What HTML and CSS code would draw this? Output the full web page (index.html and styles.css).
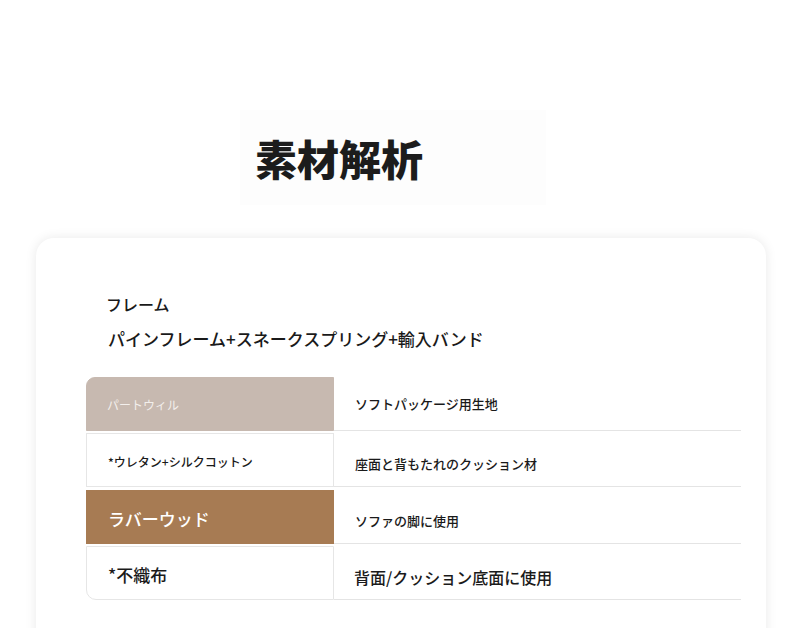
FILE: index.html
```html
<!DOCTYPE html>
<html lang="ja">
<head>
<meta charset="utf-8">
<title>素材解析</title>
<link rel="stylesheet" href="styles.css">
</head>
<body>
<div class="page">
  <header class="title-wrap">
    <h1 class="title">素材解析</h1>
  </header>
  <section class="card">
    <p class="label">フレーム</p>
    <p class="frame-desc">パインフレーム+スネークスプリング+輸入バンド</p>
    <div class="table">
      <div class="row">
        <div class="cell-name name-taupe first">パートウィル</div>
        <div class="cell-desc">ソフトパッケージ用生地</div>
      </div>
      <div class="row low">
        <div class="cell-name name-plain small">*ウレタン+シルクコットン</div>
        <div class="cell-desc">座面と背もたれのクッション材</div>
      </div>
      <div class="row low">
        <div class="cell-name name-brown big">ラバーウッド</div>
        <div class="cell-desc">ソファの脚に使用</div>
      </div>
      <div class="row low">
        <div class="cell-name name-plain big last">*不織布</div>
        <div class="cell-desc big-desc">背面/クッション底面に使用</div>
      </div>
    </div>
  </section>
</div>
</body>
</html>
```
FILE: styles.css
```css
* { box-sizing: border-box; }
html, body {
  margin: 0;
  padding: 0;
  background: #ffffff;
  font-family: "Noto Sans CJK JP", "Noto Sans", sans-serif;
  color: #1a1a1a;
  overflow: hidden;
}
.page {
  width: 790px;
  height: 628px;
  overflow: hidden;
}
.title-wrap {
  margin: 110px 0 0 240px;
  width: 306px;
  height: 95px;
  background: #fdfdfd;
  padding: 26px 0 0 15px;
}
.title {
  margin: 0;
  font-size: 42px;
  line-height: 44px;
  font-weight: 900;
  color: #1c1c1c;
}
.card {
  margin: 33px 0 0 36px;
  width: 730px;
  height: 420px;
  background: #fff;
  border-radius: 18px;
  box-shadow: 0 0 12px rgba(0, 0, 0, 0.09);
  padding: 54px 25px 0 50px;
}
.label {
  margin: 0 0 0 20px;
  font-size: 16px;
  line-height: 24px;
  font-weight: 500;
  color: #1a1a1a;
}
.frame-desc {
  margin: 11px 0 0 22px;
  font-size: 17px;
  line-height: 24px;
  font-weight: 500;
  color: #1a1a1a;
}
.table {
  margin-top: 26px;
  display: flex;
  flex-direction: column;
  gap: 2px;
}
.row {
  display: flex;
  height: 54px;
}
.row + .row.low:nth-child(3) { margin-top: 1px; }
.cell-name {
  width: 248px;
  flex: none;
  display: flex;
  align-items: center;
  padding-left: 20px;
  border: 1px solid #e6e6e6;
  font-weight: 500;
}
.cell-desc {
  flex: 1;
  display: flex;
  align-items: center;
  padding-left: 21px;
  border-bottom: 1px solid #e4e4e4;
  font-size: 13px;
  font-weight: 500;
  color: #1a1a1a;
}
.row.low .cell-desc { padding-top: 8px; }
.row.low .cell-name { padding-top: 2px; }
.name-taupe {
  background: #c7b9b0;
  border-color: #c7b9b0;
  color: #f3efec;
  font-size: 12px;
  font-weight: 400;
}
.name-brown {
  background: #a77b53;
  border-color: #a77b53;
  color: #ffffff;
}
.name-plain { background: #fff; }
.small { font-size: 12px; padding-left: 21px; }
.big { font-size: 17px; padding-left: 21px; }
.first { border-top-left-radius: 9px; }
.last { border-bottom-left-radius: 10px; }
.big-desc { font-size: 16px; padding-left: 20px; }
```
